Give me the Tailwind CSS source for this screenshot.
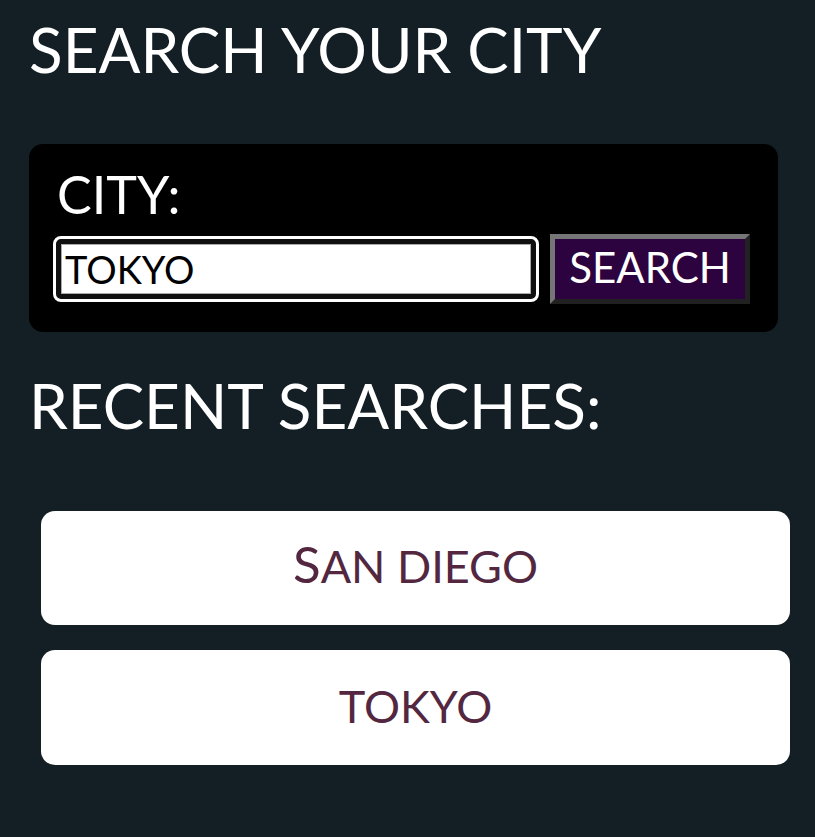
<!DOCTYPE html>
<html lang="en">
<head>
<meta charset="utf-8">
<meta name="viewport" content="width=device-width, initial-scale=1">
<title>Search your city</title>
<script src="https://cdn.jsdelivr.net/npm/@tailwindcss/browser@4"></script>
</head>
<body class="min-h-screen bg-[#141f25] font-['Lato',sans-serif] text-white">
<main class="pt-3 pr-[37px] pb-12 pl-[29px]">
  <h1 class="text-[62px] leading-[74px] whitespace-nowrap">SEARCH YOUR CITY</h1>
  <form class="mt-[58px] rounded-[14px] bg-black px-7 pt-[18px] pb-7" onsubmit="return false">
    <label for="city" class="block text-[52px] leading-[64px]">CITY:</label>
    <div class="mt-2 -ml-px flex items-center gap-[14px]">
      <input id="city" type="text" value="TOKYO" class="h-[60px] min-w-0 flex-1 rounded-[5px] border-5 border-[#101010] bg-white px-1 text-[38px] text-black shadow-[inset_0_0_0_1px_#aaa] outline-3 outline-white">
      <button type="submit" class="h-[70px] w-[200px] shrink-0 border-5 border-t-[#767676] border-r-[#212121] border-b-[#212121] border-l-[#767676] bg-[#2d033f] pb-1 text-[42px] leading-none">SEARCH</button>
    </div>
  </form>
  <h2 class="mt-9 text-[62px] leading-[74px] whitespace-nowrap">RECENT SEARCHES:</h2>
  <div class="mt-[69px] -mr-3 ml-3 flex flex-col gap-[25px] text-[#53273f]">
    <button type="button" class="h-[114px] rounded-[14px] bg-white pb-1.5 text-[45px] leading-[54px]"><span class="inline-block uppercase first-letter:text-[51px]">San diego</span></button>
    <button type="button" class="h-[115px] rounded-[14px] bg-white pb-1 text-[45px] leading-[54px] uppercase">tokyo</button>
  </div>
</main>
</body>
</html>
